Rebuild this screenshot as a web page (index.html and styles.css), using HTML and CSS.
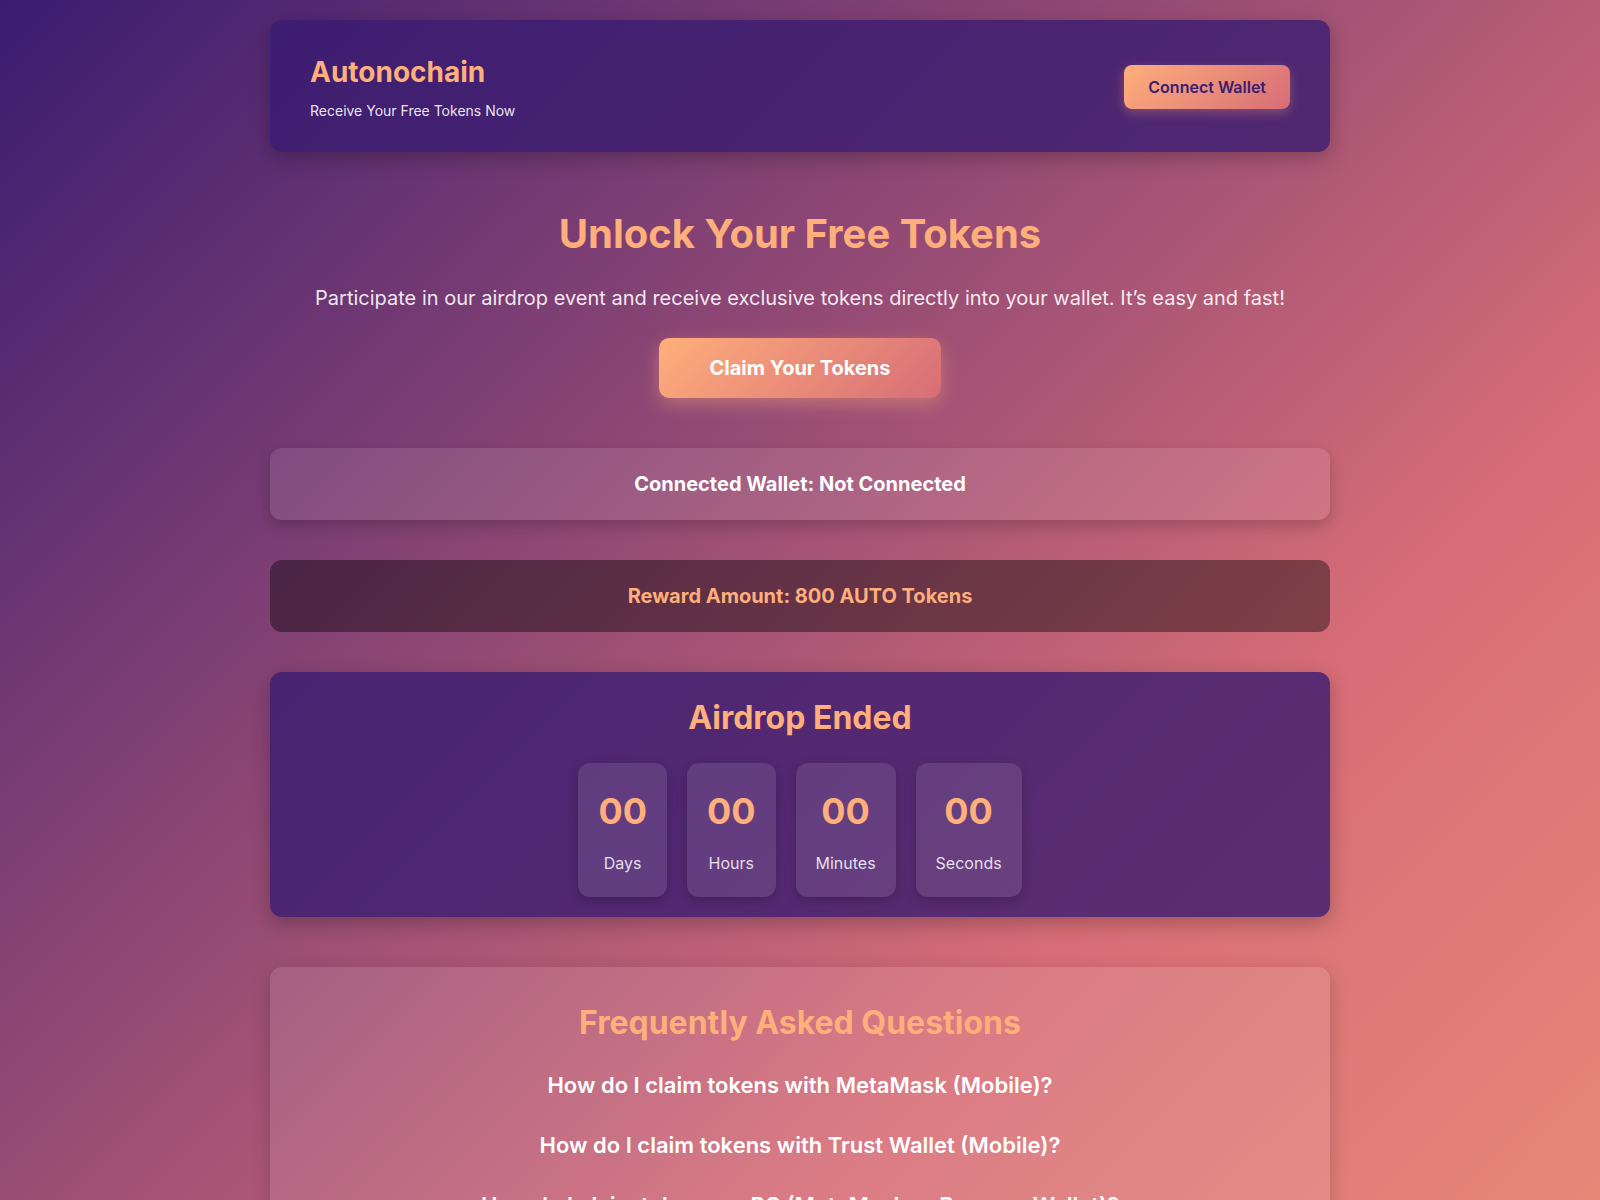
FILE: index.html
```html
<!DOCTYPE html>
<html lang="en">
<head>
  <meta charset="UTF-8">
  <title>Autonochain Airdrop</title>
  <link rel="stylesheet" href="styles.css">
</head>
<body>
  <div class="container">
    <header class="site-header">
      <div class="brand">
        <h1 class="brand-title">Autonochain</h1>
        <p class="brand-tagline">Receive Your Free Tokens Now</p>
      </div>
      <button class="btn btn-connect" id="connect-btn">Connect Wallet</button>
    </header>

    <section class="hero">
      <h2 class="hero-title">Unlock Your Free Tokens</h2>
      <p class="hero-text">Participate in our airdrop event and receive exclusive tokens directly into your wallet. It’s easy and fast!</p>
      <button class="btn btn-claim" id="claim-btn">Claim Your Tokens</button>
    </section>

    <div class="info-box wallet-box">
      Connected Wallet: <span id="wallet-address">Not Connected</span>
    </div>

    <div class="info-box reward-box">
      Reward Amount: 800 AUTO Tokens
    </div>

    <section class="countdown-card">
      <h3 class="countdown-title">Airdrop Ended</h3>
      <div class="countdown">
        <div class="time-box">
          <span class="time-value" id="days">00</span>
          <span class="time-label">Days</span>
        </div>
        <div class="time-box">
          <span class="time-value" id="hours">00</span>
          <span class="time-label">Hours</span>
        </div>
        <div class="time-box">
          <span class="time-value" id="minutes">00</span>
          <span class="time-label">Minutes</span>
        </div>
        <div class="time-box">
          <span class="time-value" id="seconds">00</span>
          <span class="time-label">Seconds</span>
        </div>
      </div>
    </section>

    <section class="faq-card">
      <h3 class="faq-title">Frequently Asked Questions</h3>
      <div class="faq-item">
        <div class="faq-question">How do I claim tokens with MetaMask (Mobile)?</div>
      </div>
      <div class="faq-item">
        <div class="faq-question">How do I claim tokens with Trust Wallet (Mobile)?</div>
      </div>
      <div class="faq-item">
        <div class="faq-question">How do I claim tokens on PC (MetaMask or Browser Wallet)?</div>
      </div>
      <div class="faq-item">
        <div class="faq-question">Is there a fee to claim the airdrop?</div>
      </div>
    </section>
  </div>
</body>
</html>
```

FILE: styles.css
```css
:root {
  --purple: 58 28 113;
  --coral: 215 109 119;
  --peach: 255 175 123;
}

* {
  margin: 0;
  padding: 0;
  box-sizing: border-box;
}

body {
  font-family: 'Inter', 'Noto Sans', sans-serif;
  color: #fff;
  /* stops stretched past the viewport so the peach end sits below the fold */
  background: linear-gradient(135deg, rgb(var(--purple)) 0%, rgb(var(--coral)) 71.4%, rgb(var(--peach)) 142.8%);
  background-attachment: fixed;
  min-height: 100vh;
  -webkit-font-smoothing: antialiased;
}

.container {
  max-width: 1060px;
  margin: 0 auto;
  padding: 20px 0 60px;
}

/* Header */
.site-header {
  display: flex;
  justify-content: space-between;
  align-items: center;
  padding: 32px 40px 31px;
  background: rgb(var(--purple) / 0.8);
  border-radius: 12px;
  box-shadow: 0 6px 20px rgb(0 0 0 / 0.25);
}

.brand-title {
  font-size: 28px;
  line-height: 40px;
  font-weight: 700;
  color: rgb(var(--peach));
}

.brand-tagline {
  margin-top: 9px;
  font-size: 14px;
  line-height: 20px;
  color: rgb(255 255 255 / 0.9);
}

.btn {
  font-family: inherit;
  border: none;
  cursor: pointer;
  background: linear-gradient(135deg, rgb(var(--peach)), rgb(var(--coral)));
  transition: transform 0.15s ease, box-shadow 0.15s ease;
}

.btn:hover {
  transform: translateY(-2px);
}

.btn-connect {
  padding: 12px 24px;
  font-size: 16px;
  line-height: 20px;
  font-weight: 600;
  color: rgb(var(--purple));
  border-radius: 8px;
  box-shadow: 0 4px 12px rgb(var(--peach) / 0.3);
}

/* Hero */
.hero {
  padding: 58px 0 0;
  text-align: center;
}

.hero-title {
  font-size: 40px;
  line-height: 48px;
  font-weight: 700;
  color: rgb(var(--peach));
}

.hero-text {
  margin-top: 25px;
  font-size: 20px;
  line-height: 30px;
  color: rgb(255 255 255 / 0.9);
}

.btn-claim {
  margin-top: 25px;
  padding: 18px 50px;
  font-size: 20px;
  line-height: 24px;
  font-weight: 700;
  color: #fff;
  border-radius: 10px;
  box-shadow: 0 6px 18px rgb(var(--peach) / 0.4);
}

/* Wallet + reward rows */
.info-box {
  margin-top: 50px;
  padding: 24px;
  text-align: center;
  font-size: 20px;
  line-height: 24px;
  font-weight: 700;
  border-radius: 12px;
}

.wallet-box {
  background: rgb(255 255 255 / 0.1);
  box-shadow: 0 6px 16px rgb(0 0 0 / 0.2);
}

.reward-box {
  margin-top: 40px;
  background: rgb(0 0 0 / 0.4);
  color: rgb(var(--peach));
}

/* Countdown */
.countdown-card {
  margin-top: 40px;
  padding: 21px 20px 20px;
  background: rgb(var(--purple) / 0.8);
  border-radius: 12px;
  box-shadow: 0 6px 20px rgb(0 0 0 / 0.25);
  text-align: center;
}

.countdown-title {
  font-size: 32px;
  line-height: 50px;
  font-weight: 700;
  color: rgb(var(--peach));
}

.countdown {
  margin-top: 20px;
  display: flex;
  justify-content: center;
  gap: 20px;
}

.time-box {
  display: flex;
  flex-direction: column;
  align-items: center;
  padding: 21px 20px 22px;
  background: rgb(255 255 255 / 0.1);
  border-radius: 12px;
  box-shadow: 0 4px 12px rgb(0 0 0 / 0.2);
}

.time-value {
  font-size: 36px;
  line-height: 54px;
  font-weight: 700;
  color: rgb(var(--peach));
}

.time-label {
  margin-top: 13px;
  font-size: 16px;
  line-height: 24px;
  color: rgb(255 255 255 / 0.85);
}

/* FAQ */
.faq-card {
  margin-top: 50px;
  padding: 31px 40px 30px;
  background: rgb(255 255 255 / 0.1);
  border-radius: 12px;
  box-shadow: 0 6px 20px rgb(0 0 0 / 0.2);
  text-align: center;
}

.faq-title {
  font-size: 32px;
  line-height: 50px;
  font-weight: 700;
  color: rgb(var(--peach));
}

.faq-item:first-of-type {
  margin-top: 7px;
}

.faq-question {
  padding: 15px 0;
  font-size: 22px;
  line-height: 30px;
  font-weight: 600;
  cursor: pointer;
}
```
